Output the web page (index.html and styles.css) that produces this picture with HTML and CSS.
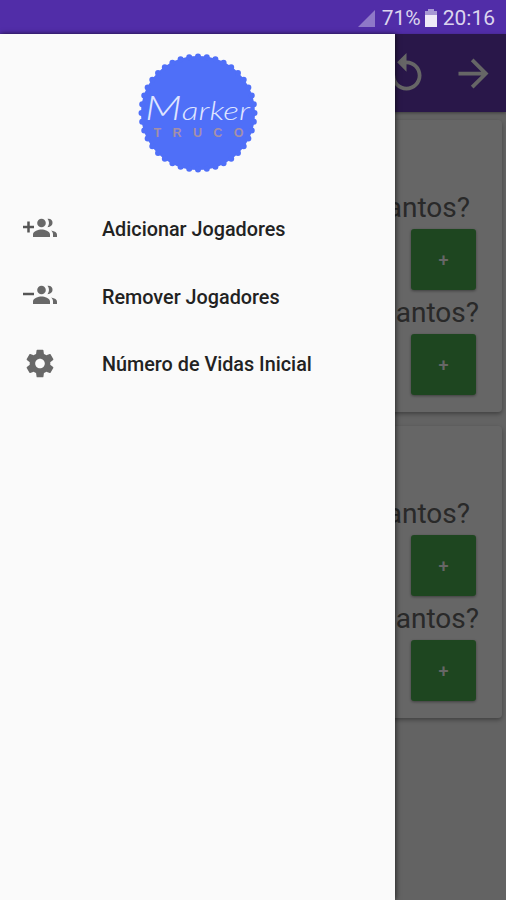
FILE: index.html
```
<!DOCTYPE html>
<html lang="pt-BR">
<head>
    <meta charset="UTF-8">
    <meta name="viewport" content="width=device-width, initial-scale=1.0">
    <title>Marker Truco</title>
    <link rel="stylesheet" href="styles.css">
</head>
<body>
    <header class="status-bar">
        <svg class="signal" viewBox="0 0 17 17"><path d="M17 0v17H0z"/></svg>
        <span class="percent">71%</span>
        <svg class="battery" viewBox="0 0 12 18"><path class="battery-top" d="M3 0h6v2h3v5H0V2h3z"/><path d="M0 6h12v12H0z"/></svg>
        <span class="clock">20:16</span>
    </header>

    <div class="app">
        <div class="toolbar">
            <svg class="tool-icon undo" viewBox="0 0 24 24"><path d="M12 5V1L7 6l5 5V7c3.31 0 6 2.69 6 6s-2.69 6-6 6-6-2.69-6-6H4c0 4.42 3.58 8 8 8s8-3.58 8-8-3.58-8-8-8z"/></svg>
            <svg class="tool-icon" viewBox="0 0 24 24"><path d="M12 4l-1.41 1.41L16.17 11H4v2h12.17l-5.58 5.59L12 20l8-8z"/></svg>
        </div>
        <main class="players">
            <section class="card">
                <p class="label">Quantos?</p>
                <button class="plus">+</button>
                <p class="label wide">Quantos?</p>
                <button class="plus">+</button>
            </section>
            <section class="card">
                <p class="label">Quantos?</p>
                <button class="plus">+</button>
                <p class="label wide">Quantos?</p>
                <button class="plus">+</button>
            </section>
        </main>
    </div>

    <div class="overlay"></div>

    <nav class="drawer">
        <svg class="logo" viewBox="0 0 120 120">
            <circle class="seal" cx="60" cy="60" r="57"/>
            <circle class="seal-edge" cx="60" cy="60" r="56.5" pathLength="40"/>
            <text class="logo-name" x="7" y="67" textLength="105" lengthAdjust="spacingAndGlyphs"><tspan class="logo-initial">M</tspan>arker</text>
            <text class="logo-sub" x="15.500" y="84" textLength="90">TRUCO</text>
        </svg>
        <ul class="menu">
            <li class="item">
                <svg class="icon" viewBox="0 0 36 24">
                    <path class="sign" d="M1 9h11M6.500 3.500v11"/>
                    <circle cx="19.500" cy="5" r="4.300"/>
                    <path d="M11 19v-2.500c0-3.500 5.500-5 8.500-5s8.500 1.500 8.500 5V19zM25.500 .8c6.500-.8 7 8.200 0 8.400 2-2.600 2-5.800 0-8.400zM29 12.500c4 .8 6 2 6 4.300V19h-4v-2.500c0-1.800-.7-3-2-4z"/>
                </svg>
                <span>Adicionar Jogadores</span>
            </li>
            <li class="item">
                <svg class="icon" viewBox="0 0 36 24">
                    <path class="sign" d="M1 9h11"/>
                    <circle cx="19.500" cy="5" r="4.300"/>
                    <path d="M11 19v-2.500c0-3.500 5.500-5 8.500-5s8.500 1.500 8.500 5V19zM25.500 .8c6.500-.8 7 8.200 0 8.400 2-2.600 2-5.800 0-8.400zM29 12.500c4 .8 6 2 6 4.300V19h-4v-2.500c0-1.800-.7-3-2-4z"/>
                </svg>
                <span>Remover Jogadores</span>
            </li>
            <li class="item">
                <svg class="icon gear" viewBox="0 0 24 24"><path d="M19.430 12.980c.04-.32.070-.64.070-.98s-.03-.66-.07-.98l2.110-1.650c.19-.15.240-.42.120-.64l-2-3.460c-.12-.22-.39-.3-.61-.22l-2.490 1c-.52-.4-1.080-.73-1.690-.98l-.38-2.650C14.460 2.180 14.250 2 14 2h-4c-.25 0-.46.180-.49.420l-.38 2.650c-.61.250-1.170.590-1.690.980l-2.490-1c-.23-.09-.49 0-.61.220l-2 3.460c-.13.220-.07.490.120.640l2.110 1.650c-.04.320-.07.650-.07.980s.030.660.070.980l-2.110 1.650c-.19.150-.24.420-.12.640l2 3.460c.12.220.390.300.610.220l2.490-1c.52.400 1.080.730 1.690.980l.38 2.650c.03.240.240.420.490.420h4c.25 0 .46-.18.490-.42l.38-2.650c.61-.25 1.170-.59 1.690-.98l2.490 1c.23.090.490 0 .610-.22l2-3.460c.12-.22.070-.49-.12-.64l-2.110-1.650zM12 15.500c-1.930 0-3.500-1.570-3.500-3.500s1.570-3.500 3.500-3.500 3.500 1.570 3.500 3.500-1.570 3.500-3.500 3.500z"/></svg>
                <span>Número de Vidas Inicial</span>
            </li>
        </ul>
    </nav>
</body>
</html>
```
FILE: styles.css
```
* {
    box-sizing: border-box;
    margin: 0;
    padding: 0;
}

body {
    height: 100vh;
    overflow: hidden;
    font-family: Roboto, sans-serif;
    background: #f7f7f7;
    position: relative;
}

.status-bar {
    height: 34px;
    padding: 2px 11px 0 0;
    display: flex;
    align-items: center;
    justify-content: flex-end;
    background: #512da8;
    color: #dcd5ee;
    font-size: 21px;
}

.signal {
    width: 17px;
    height: 17px;
    margin-right: 7px;
    fill: #8f78c8;
}

.battery {
    width: 12px;
    height: 18px;
    margin: 0 6px 0 4px;
    fill: #efeaf8;
}

.battery-top {
    fill: #a798d4;
}

.toolbar {
    height: 78px;
    padding-right: 10px;
    display: flex;
    align-items: center;
    justify-content: flex-end;
    gap: 22px;
    background: #673ab7;
    box-shadow: 0 1px 3px rgba(0, 0, 0, 0.4);
}

.tool-icon {
    width: 45px;
    height: 45px;
    fill: #fff;
}

.players {
    padding: 8px 4px;
    display: flex;
    flex-direction: column;
    gap: 14px;
}

.card {
    height: 292px;
    padding: 65px 26px 0 0;
    display: flex;
    flex-direction: column;
    align-items: flex-end;
    background: #fff;
    border-radius: 4px;
    box-shadow: 0 2px 4px rgba(0, 0, 0, 0.35);
}

.label {
    height: 44px;
    margin-right: 6px;
    font-size: 28px;
    line-height: 46px;
    color: #666;
}

.label.wide {
    margin-right: -3px;
}

.plus {
    width: 65px;
    height: 61px;
    border: none;
    border-radius: 3px;
    background: #4caf50;
    color: #fff;
    font: 500 18px Roboto, sans-serif;
    box-shadow: 0 1px 3px rgba(0, 0, 0, 0.4);
}

.overlay {
    position: absolute;
    inset: 34px 0 0;
    background: rgba(0, 0, 0, 0.6);
}

.drawer {
    position: absolute;
    top: 34px;
    bottom: 0;
    left: 0;
    width: 395px;
    padding-top: 19px;
    display: flex;
    flex-direction: column;
    align-items: center;
    background: #fafafa;
    box-shadow: 1px 0 5px rgba(0, 0, 0, 0.6);
}

.logo {
    width: 120px;
    height: 120px;
}

.seal {
    fill: #4f6ff8;
}

.seal-edge {
    fill: none;
    stroke: #4f6ff8;
    stroke-width: 6;
    stroke-linecap: round;
    stroke-dasharray: 0 1;
}

.logo-name {
    font: italic 300 26px Lato, sans-serif;
    fill: #dfe5ff;
}

.logo-initial {
    font-size: 34px;
}

.logo-sub {
    font: bold 12.5px "Liberation Sans", sans-serif;
    fill: #a58fa8;
}

.menu {
    width: 100%;
    margin-top: 23px;
    list-style: none;
}

.item {
    height: 67.5px;
    padding-left: 22px;
    display: flex;
    align-items: center;
    gap: 44px;
    font-size: 19.8px;
    font-weight: 500;
    color: #222;
}

.icon {
    width: 36px;
    height: 24px;
    fill: #686868;
}

.icon.gear {
    height: 33px;
    margin-top: -2px;
}

.sign {
    stroke: #555;
    stroke-width: 2.5;
}
```
